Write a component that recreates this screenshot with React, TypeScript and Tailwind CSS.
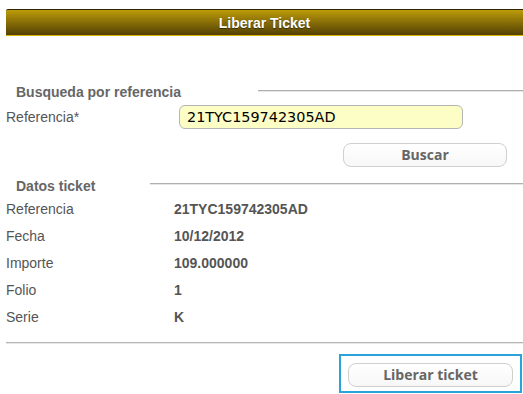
import React from "react";

const rows: [string, string][] = [
  ["Referencia", "21TYC159742305AD"],
  ["Fecha", "10/12/2012"],
  ["Importe", "109.000000"],
  ["Folio", "1"],
  ["Serie", "K"],
];

export default function App() {
  return (
    <div className="w-[523px] h-[394px] overflow-hidden bg-white font-['Liberation_Sans',Arial,sans-serif] text-[14px] text-[#555]">
      <div className="pt-[9px] pl-[6px]">
        <div className="h-[27px] rounded-tl-[2px] border-t border-t-[#2e2404] border-b border-b-[#d8b40a] bg-gradient-to-b from-[#bd9c08] to-[#544104] flex items-center justify-center">
          <span className="font-bold text-white text-[14px] leading-[16px] [text-shadow:0_1px_1px_rgba(0,0,0,0.5)]">
            Liberar Ticket
          </span>
        </div>
      </div>

      {/* Busqueda por referencia */}
      <div className="mt-[48px] flex items-start">
        <div className="w-[258px] pl-[16px] font-bold text-[#666] leading-[16px]">
          Busqueda por referencia
        </div>
        <div className="flex-1 mt-[6px] h-[2px] border-t border-t-[#b0b0b0] border-b border-b-[#e6e6e6]" />
      </div>

      <div className="mt-[5px] flex items-center h-[24px]">
        <div className="w-[179px] pl-[6px] leading-[16px]">Referencia*</div>
        <div className="w-[284px] h-[24px] rounded-[6px] border border-[#b5b5b5] bg-[#fdfdc6] flex items-center pl-[7px] font-['DejaVu_Sans',sans-serif] text-[14.4px] text-black leading-[16px]">
          21TYC159742305AD
        </div>
      </div>

      <div className="mt-[14px] flex">
        <div className="ml-[343px] w-[164px] h-[24px] rounded-[8px] border border-[#cfcfcf] bg-gradient-to-b from-white to-[#f7f7f7] flex items-center justify-center font-['Open_Sans',sans-serif] font-bold text-[14px] text-[#666] leading-[16px]">
          Buscar
        </div>
      </div>

      {/* Datos ticket */}
      <div className="mt-[11px] flex items-start">
        <div className="w-[150px] pl-[16px] font-bold text-[#666] leading-[16px]">
          Datos ticket
        </div>
        <div className="flex-1 mt-[5px] h-[2px] border-t border-t-[#b0b0b0] border-b border-b-[#e6e6e6]" />
      </div>

      <div className="mt-[2px] flex flex-col">
        {rows.map(([label, value]) => (
          <div key={label} className="flex h-[27px] items-center leading-[27px]">
            <div className="w-[174px] pl-[6px]">{label}</div>
            <div className="font-bold text-[#555]">{value}</div>
          </div>
        ))}
      </div>

      <div className="mt-[11px] ml-[6px] h-[2px] border-t border-t-[#b5b5b5] border-b border-b-[#e8e8e8]" />

      <div className="mt-[10px] flex">
        <div className="ml-[339px] w-[183px] h-[39px] border-2 border-[#29a3d9] pl-[7px] pt-[7px]">
          <div className="w-[165px] h-[24px] rounded-[8px] border border-[#cfcfcf] bg-gradient-to-b from-white to-[#f7f7f7] flex items-center justify-center font-['Open_Sans',sans-serif] font-bold text-[14px] text-[#666] leading-[16px]">
            Liberar ticket
          </div>
        </div>
      </div>
    </div>
  );
}
